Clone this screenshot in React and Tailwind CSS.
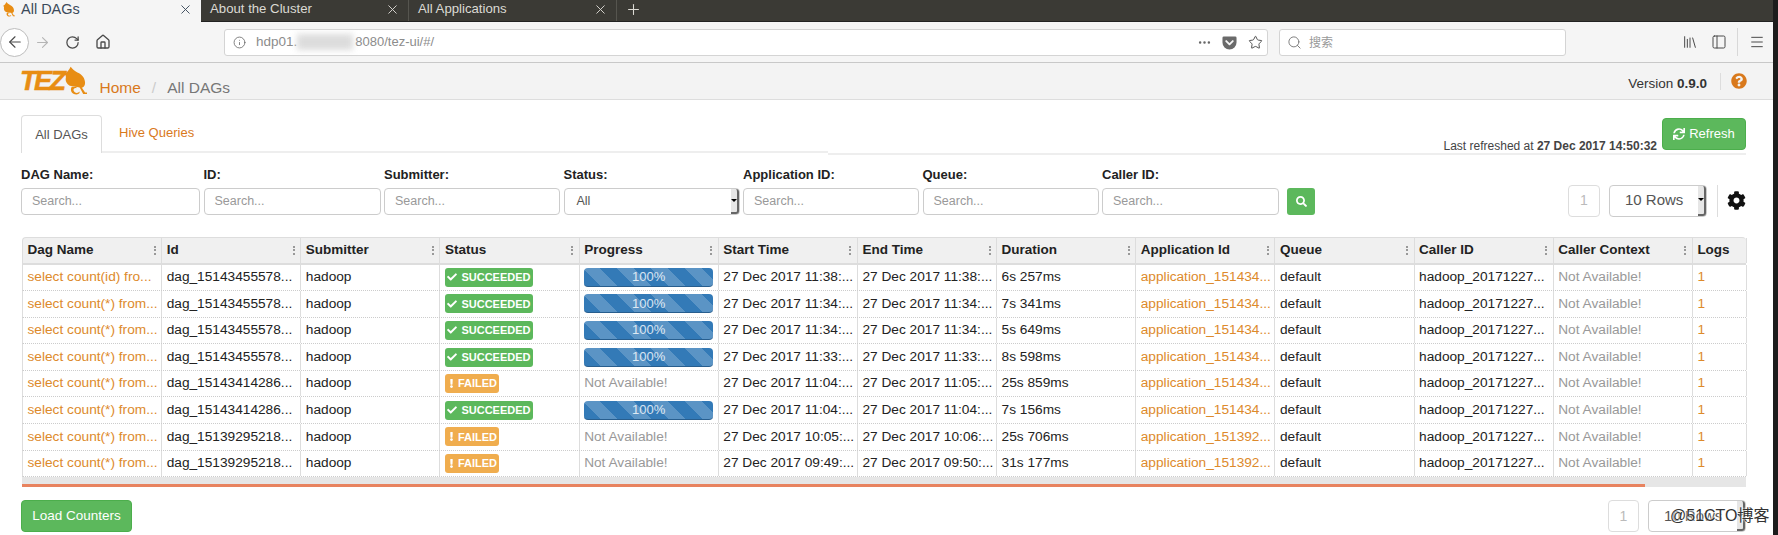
import { useState } from "react";
import { ArrowLeft, ArrowRight, RotateCw, Home, Info, Star, Search, Library, PanelLeft, Menu, Ellipsis, X, Plus } from "lucide-react";
import { FaCheck, FaCog, FaExclamation, FaQuestionCircle, FaSearch, FaSync } from "react-icons/fa";

const rows = [
  ["select count(id) fro...", "dag_15143455578...", "succeeded", "27 Dec 2017 11:38:...", "27 Dec 2017 11:38:...", "6s 257ms", "application_151434..."],
  ["select count(*) from...", "dag_15143455578...", "succeeded", "27 Dec 2017 11:34:...", "27 Dec 2017 11:34:...", "7s 341ms", "application_151434..."],
  ["select count(*) from...", "dag_15143455578...", "succeeded", "27 Dec 2017 11:34:...", "27 Dec 2017 11:34:...", "5s 649ms", "application_151434..."],
  ["select count(*) from...", "dag_15143455578...", "succeeded", "27 Dec 2017 11:33:...", "27 Dec 2017 11:33:...", "8s 598ms", "application_151434..."],
  ["select count(*) from...", "dag_15143414286...", "failed", "27 Dec 2017 11:04:...", "27 Dec 2017 11:05:...", "25s 859ms", "application_151434..."],
  ["select count(*) from...", "dag_15143414286...", "succeeded", "27 Dec 2017 11:04:...", "27 Dec 2017 11:04:...", "7s 156ms", "application_151434..."],
  ["select count(*) from...", "dag_15139295218...", "failed", "27 Dec 2017 10:05:...", "27 Dec 2017 10:06:...", "25s 706ms", "application_151392..."],
  ["select count(*) from...", "dag_15139295218...", "failed", "27 Dec 2017 09:49:...", "27 Dec 2017 09:50:...", "31s 177ms", "application_151392..."],
];

const columns = ["Dag Name", "Id", "Submitter", "Status", "Progress", "Start Time", "End Time", "Duration", "Application Id", "Queue", "Caller ID", "Caller Context", "Logs"];

const filters = [
  { label: "DAG Name:", width: "w-[179px]" },
  { label: "ID:", width: "w-[177px]" },
  { label: "Submitter:", width: "w-[176px]" },
  { label: "Status:", width: "w-[176px]", select: true },
  { label: "Application ID:", width: "w-[176px]" },
  { label: "Queue:", width: "w-[176px]" },
  { label: "Caller ID:", width: "w-[177px]" },
];

const Elephant = ({ className }) => (
  <svg viewBox="0 0 24 30" className={className} fill="#e88d14">
    <path d="M7 0 C9 3 11 4 14 6 C19 8 22 12 22 17 C22 20 20 22 18 22 L6 20 C3 18 1 15 2 11 C2 9 1 8 0 8 C3 6 5 4 7 0 Z" />
    <path d="M8 21 C6 25 8 29 13 29 C16 29 17 27 16 26 C15 28 11 28 10 25 C9.5 23.5 11 22 13 22.5 L13 21 Z" />
    <path d="M16 21 L18 21 L22 27 L24 27 L24 28.5 L20 28.5 Z" />
  </svg>
);

const PocketIcon = () => (
  <svg viewBox="0 0 16 16" className="w-[15px] h-[15px]" fill="#6a6a6a">
    <path d="M2 1.5 H14 A1.5 1.5 0 0 1 15.5 3 V8 A7.5 7.5 0 0 1 0.5 8 V3 A1.5 1.5 0 0 1 2 1.5 Z" />
    <path d="M4.5 6.5 L8 10 L11.5 6.5" fill="none" stroke="#f5f5f5" strokeWidth="2" strokeLinecap="round" strokeLinejoin="round" />
  </svg>
);

const BrowserTab = ({ title }) => (
  <div className="w-[208px] flex items-center justify-between pl-[9px] pr-[8px] pb-[3px] border-r border-[#56554f] text-[#dcdad4]">
    <span className="text-[13.2px]">{title}</span>
    <X size={15} strokeWidth={1.5} />
  </div>
);

const NativeSelect = ({ label, className, pad }) => (
  <div className={`flex items-center justify-between bg-white border border-[#ccc] rounded-[4px] text-[#555] ${className}`}>
    <span className={pad}>{label}</span>
    <div className="self-stretch w-[8px] bg-[#e6e6e6] border-r-2 border-b-2 border-[#666] rounded-r-[3px] flex items-center justify-center">
      <div className="border-x-[3px] border-t-[3px] border-x-transparent border-t-black" />
    </div>
  </div>
);

const PageButton = ({ className }) => (
  <div className={`h-[32px] border border-[#ddd] rounded-[4px] bg-white text-[#bbb] text-[14px] flex items-center justify-center ${className}`}>1</div>
);

const StatusBadge = ({ status }) =>
  status === "succeeded" ? (
    <span className="w-[88px] h-[19px] rounded-[3px] bg-[#5cb85c] text-white text-[11px] font-bold flex items-center justify-center gap-[4px]">
      <FaCheck size={10} />
      SUCCEEDED
    </span>
  ) : (
    <span className="w-[54px] h-[19px] rounded-[3px] bg-[#f0ad4e] text-white text-[11px] font-bold flex items-center justify-center gap-[2px]">
      <FaExclamation size={9} />
      FAILED
    </span>
  );

const Progress = () => (
  <div className="w-[129px] h-[19px] rounded-[4px] border-b border-[#285e8e] text-white/80 text-[13px] flex items-center justify-center bg-[repeating-linear-gradient(45deg,#337ab7_0,#337ab7_12px,#5b94c5_12px,#5b94c5_24px)]">
    100%
  </div>
);

const Cell = ({ children, className = "" }) => (
  <div className={`px-[4.5px] flex items-center border-r border-[#ddd] whitespace-nowrap overflow-hidden ${className}`}>{children}</div>
);

export default function App() {
  const [tab] = useState("All DAGs");

  return (
    <div className="w-[1778px] h-[535px] flex bg-[#1c1c1c] overflow-hidden font-['Liberation_Sans',Arial,sans-serif]">
      <div className="relative w-[1773px] h-full bg-white flex flex-col">
        {/* firefox chrome */}
        <div className="h-[22px] bg-[#3b3a35] flex border-b border-[#222]">
          <div className="w-[201px] -mb-px bg-[#f5f5f5] flex items-center justify-between pl-[3px] pr-[8px] pb-[3px] text-[#3b4a5a]">
            <span className="flex items-center gap-[6px] text-[14.5px]">
              <Elephant className="w-[12px] h-[15px]" />
              {tab}
            </span>
            <X size={15} strokeWidth={1.5} />
          </div>
          <BrowserTab title="About the Cluster" />
          <BrowserTab title="All Applications" />
          <div className="pl-[8px] pb-[3px] flex items-center text-[#dcdad4]">
            <Plus size={17} strokeWidth={1.5} />
          </div>
        </div>
        <div className="h-[41px] bg-[#f5f5f5] border-b border-[#c8c8c8] flex items-center text-[#4a4a4a]">
          <div className="w-[29px] h-[29px] rounded-full bg-white border border-[#bdbdbd] flex items-center justify-center">
            <ArrowLeft size={18} strokeWidth={1.5} />
          </div>
          <ArrowRight size={17} strokeWidth={1.5} className="ml-[5px] text-[#b5b5b5]" />
          <RotateCw size={15} strokeWidth={2} className="ml-[14px]" />
          <Home size={16} strokeWidth={2} className="ml-[15px]" />
          <div className="ml-[113px] w-[1044px] h-[27px] bg-white border border-[#d4d4d4] rounded-[3px] flex items-center pl-[8px] pr-[4px]">
            <Info size={13} strokeWidth={1.5} className="text-[#666]" />
            <span className="ml-[10px] text-[13.5px] text-[#8c8c8c]">hdp01.</span>
            <span className="w-[56px] h-[16px] bg-[#dcdcdc] blur-[3px]" />
            <span className="ml-[2px] text-[13px] text-[#8c8c8c]">8080/tez-ui/#/</span>
            <Ellipsis size={15} className="ml-auto text-[#666]" />
            <span className="ml-[10px]"><PocketIcon /></span>
            <Star size={15} strokeWidth={1.5} className="ml-[11px]" />
          </div>
          <div className="ml-[11px] w-[287px] h-[27px] bg-white border border-[#d4d4d4] rounded-[3px] flex items-center pl-[7px]">
            <Search size={15} strokeWidth={1.5} className="text-[#777]" />
            <span className="ml-[7px] text-[12px] text-[#999] font-['Noto_Sans_CJK_SC',sans-serif]">搜索</span>
          </div>
          <Library size={16} strokeWidth={1.5} className="ml-[116px]" />
          <PanelLeft size={16} strokeWidth={1.5} className="ml-[13px]" />
          <div className="ml-[10px] w-px h-[28px] bg-[#d8d8d8]" />
          <Menu size={16} strokeWidth={1.5} className="ml-[11px]" />
        </div>

        {/* tez nav */}
        <div className="h-[37px] bg-[#f3f3f3] border-b border-[#ddd] flex items-center pl-[20px] pr-[26px]">
          <span className="text-[27px] leading-none font-bold italic tracking-[-2.5px] text-[#e88d14] [-webkit-text-stroke:0.5px_#e88d14]">TEZ</span>
          <Elephant className="w-[23px] h-[30px]" />
          <div className="ml-[13px] mt-[13px] text-[15.5px] flex">
            <span className="text-[#d9791c]">Home</span>
            <span className="mx-[11px] text-[#ccc]">/</span>
            <span className="text-[#777]">All DAGs</span>
          </div>
          <div className="ml-auto text-[13.5px] text-[#333] mt-[6px]">
            Version <b>0.9.0</b>
          </div>
          <div className="ml-[13px] w-px h-[17px] bg-[#ddd]" />
          <FaQuestionCircle size={16} className="ml-[10px] text-[#d9791c]" />
        </div>

        <div className="ml-[21px] w-[1725px] mt-[15px] flex flex-col">
          {/* tabs */}
          <div className="flex h-[40px]">
            <div className="w-[807px] h-[38px] flex border-b-2 border-[#eee]">
              <div className="w-[81px] h-[38px] bg-white border border-b-0 border-[#ddd] rounded-t-[4px] flex items-center justify-center text-[13px] text-[#555]">
                All DAGs
              </div>
              <div className="ml-[17px] flex items-center text-[13px] text-[#d9791c]">Hive Queries</div>
            </div>
            <div className="flex-1 border-b-2 border-[#eee] flex justify-end items-start pt-[3px]">
              <span className="mt-[19px] mr-[5px] text-[12px] text-[#444]">
                Last refreshed at <b>27 Dec 2017 14:50:32</b>
              </span>
              <div className="w-[84px] h-[32px] rounded-[4px] bg-[#5cb85c] border border-[#4cae4c] text-white text-[13px] flex items-center justify-center gap-[4px]">
                <FaSync size={12} />
                Refresh
              </div>
            </div>
          </div>

          {/* filters */}
          <div className="mt-[10px] flex items-end">
            <div className="flex items-end gap-[3.5px]">
              {filters.map((f) => (
                <div key={f.label} className={f.width}>
                  <div className="text-[13px] font-bold text-[#222] mb-[3px]">{f.label}</div>
                  {f.select ? (
                    <NativeSelect label="All" pad="pl-[12px]" className="h-[27px] text-[12.5px]" />
                  ) : (
                    <div className="h-[27px] px-[10px] bg-white border border-[#ccc] rounded-[4px] text-[12.5px] text-[#999] flex items-center">Search...</div>
                  )}
                </div>
              ))}
            </div>
            <div className="ml-[8px] w-[28px] h-[27px] rounded-[3px] bg-[#5cb85c] text-white flex items-center justify-center">
              <FaSearch size={11} />
            </div>
            <div className="ml-auto flex items-center -mb-[2px]">
              <PageButton className="w-[32px]" />
              <NativeSelect label="10 Rows" pad="pl-[15px]" className="ml-[9px] w-[98px] h-[32px] text-[15px]" />
              <div className="ml-[10px] w-px h-[32px] bg-[#ddd]" />
              <FaCog size={19} className="ml-[9px] text-[#111]" />
            </div>
          </div>

          {/* table */}
          <div className="mt-[22px] ml-px w-[1724px] text-[13.7px] text-[#222]">
            <div className="grid grid-cols-[repeat(12,139.17px)_54px] h-[28px] bg-[#f0f0f0] border-t border-l border-[#ddd] border-b-2 rounded-t-[4px] font-bold text-[13.5px]">
              {columns.map((c) => (
                <Cell key={c} className="justify-between">
                  {c}
                  {c !== "Logs" && (
                    <span className="flex flex-col gap-[1.5px] mr-[1px]">
                      <i className="w-[2px] h-[2px] bg-[#999]" />
                      <i className="w-[2px] h-[2px] bg-[#999]" />
                      <i className="w-[2px] h-[2px] bg-[#999]" />
                    </span>
                  )}
                </Cell>
              ))}
            </div>
            {rows.map((r, i) => (
              <div key={i} className="grid grid-cols-[repeat(12,139.17px)_54px] h-[26.6px] border-l border-[#ddd] border-b border-b-[#ccc] border-dotted last:border-b-0 [border-left-style:solid]">
                <Cell className="text-[#dd8a2b]">{r[0]}</Cell>
                <Cell>{r[1]}</Cell>
                <Cell>hadoop</Cell>
                <Cell><StatusBadge status={r[2]} /></Cell>
                <Cell>{r[2] === "succeeded" ? <Progress /> : <span className="text-[#999]">Not Available!</span>}</Cell>
                <Cell>{r[3]}</Cell>
                <Cell>{r[4]}</Cell>
                <Cell>{r[5]}</Cell>
                <Cell className="text-[#dd8a2b]">{r[6]}</Cell>
                <Cell>default</Cell>
                <Cell>hadoop_20171227...</Cell>
                <Cell className="text-[#999]">Not Available!</Cell>
                <Cell className="text-[#dd8a2b]">1</Cell>
              </div>
            ))}
            <div className="h-[10px] bg-[#e6e6e6] pt-[7px]">
              <div className="w-[1623px] h-[3px] bg-[#e8835f]" />
            </div>
          </div>

          {/* footer */}
          <div className="mt-[13px] flex items-center justify-between">
            <div className="w-[111px] h-[32px] rounded-[4px] bg-[#5cb85c] border border-[#4cae4c] text-white text-[13.5px] flex items-center justify-center">
              Load Counters
            </div>
            <div className="flex items-center">
              <PageButton className="w-[31px]" />
              <NativeSelect label="10 Rows" pad="pl-[15px]" className="ml-[9px] w-[98px] h-[32px] text-[15px]" />
            </div>
          </div>
        </div>

        {/* image watermark */}
        <span className="absolute left-[1670px] top-[504px] whitespace-nowrap text-[16px] text-[#333] [text-shadow:0_0_2px_#fff,0_0_2px_#fff] font-['Liberation_Sans','Noto_Sans_CJK_SC',sans-serif]">@51CTO博客</span>
      </div>
    </div>
  );
}
